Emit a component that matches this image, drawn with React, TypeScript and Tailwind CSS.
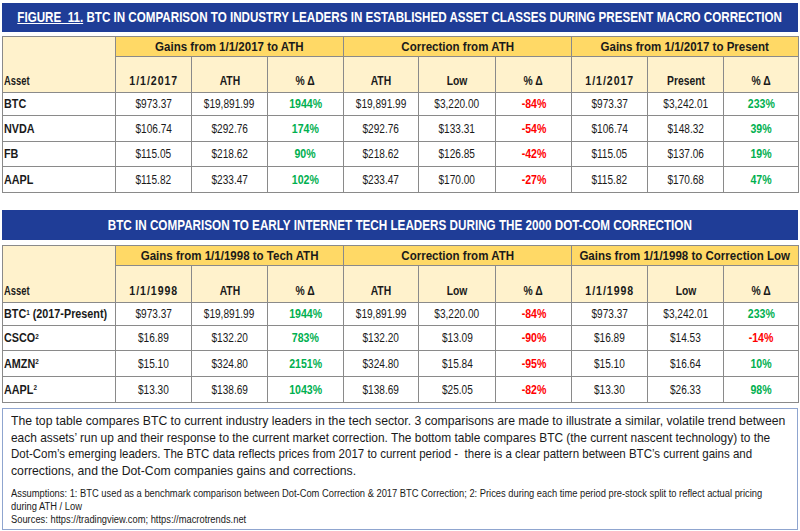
import React from "react";

type Row = { asset: React.ReactNode; vals: string[] };

const Sup = ({ n }: { n: string }) => <sup className="text-[7px]">{n}</sup>;

const t1: Row[] = [
  { asset: "BTC", vals: ["$973.37", "$19,891.99", "1944%", "$19,891.99", "$3,220.00", "-84%", "$973.37", "$3,242.01", "233%"] },
  { asset: "NVDA", vals: ["$106.74", "$292.76", "174%", "$292.76", "$133.31", "-54%", "$106.74", "$148.32", "39%"] },
  { asset: "FB", vals: ["$115.05", "$218.62", "90%", "$218.62", "$126.85", "-42%", "$115.05", "$137.06", "19%"] },
  { asset: "AAPL", vals: ["$115.82", "$233.47", "102%", "$233.47", "$170.00", "-27%", "$115.82", "$170.68", "47%"] },
];

const t2: Row[] = [
  { asset: <>BTC<Sup n="1" /> (2017-Present)</>, vals: ["$973.37", "$19,891.99", "1944%", "$19,891.99", "$3,220.00", "-84%", "$973.37", "$3,242.01", "233%"] },
  { asset: <>CSCO<Sup n="2" /></>, vals: ["$16.89", "$132.20", "783%", "$132.20", "$13.09", "-90%", "$16.89", "$14.53", "-14%"] },
  { asset: <>AMZN<Sup n="2" /></>, vals: ["$15.10", "$324.80", "2151%", "$324.80", "$15.84", "-95%", "$15.10", "$16.64", "10%"] },
  { asset: <>AAPL<Sup n="2" /></>, vals: ["$13.30", "$138.69", "1043%", "$138.69", "$25.05", "-82%", "$13.30", "$26.33", "98%"] },
];

const widths = [113, 76, 76, 76, 75, 77, 76, 76, 76, 75];

function DataTable({
  groups,
  subs,
  rows,
  heights,
  subH,
}: {
  groups: string[];
  subs: string[];
  rows: Row[];
  heights: number[];
  subH: string;
}) {
  return (
    <table className="w-full table-fixed border-collapse text-[12px] text-[#1a1a1a]">
      <colgroup>
        {widths.map((w, i) => (
          <col key={i} style={{ width: w }} />
        ))}
      </colgroup>
      <thead>
        <tr className="h-[20px]">
          <th rowSpan={2} className="border border-[#8a8a8a] bg-[#fff2cc] text-left align-bottom pb-[2px] pl-[1px] font-bold">
            <span className="inline-block whitespace-nowrap scale-x-[0.78] origin-left">Asset</span>
          </th>
          {groups.map((g) => (
            <th key={g} colSpan={3} className="border border-[#8a8a8a] bg-[#ffd966] font-bold text-center p-0">
              <span className="inline-block whitespace-nowrap scale-x-[0.96]">{g}</span>
            </th>
          ))}
        </tr>
        <tr className={subH}>
          {subs.map((s, i) => (
            <th key={i} className="border border-[#8a8a8a] bg-[#fff2cc] font-bold text-center align-bottom pb-[2px] p-0">
              <span
                className={
                  s.includes("/")
                    ? "inline-block whitespace-nowrap scale-x-[0.88] tracking-[1.1px]"
                    : "inline-block whitespace-nowrap scale-x-[0.86]"
                }
              >
                {s}
              </span>
            </th>
          ))}
        </tr>
      </thead>
      <tbody>
        {rows.map((r, ri) => (
          <tr key={ri} style={{ height: heights[ri] }}>
            <td className="border border-[#8a8a8a] bg-white text-left font-bold pl-[1px] p-0">
              <span className="inline-block whitespace-nowrap scale-x-[0.9] origin-left">{r.asset}</span>
            </td>
            {r.vals.map((v, i) => {
              const pct = i % 3 === 2;
              if (pct) {
                return (
                  <td
                    key={i}
                    className={
                      v.startsWith("-")
                        ? "border border-[#8a8a8a] bg-white text-center p-0 text-[#ff0000] font-bold"
                        : "border border-[#8a8a8a] bg-white text-center p-0 text-[#00b050] font-bold"
                    }
                  >
                    <span className="inline-block whitespace-nowrap scale-x-[0.88]">{v}</span>
                  </td>
                );
              }
              return (
                <td key={i} className="border border-[#8a8a8a] bg-white text-center p-0">
                  <span className="inline-block whitespace-nowrap scale-x-[0.84]">{v}</span>
                </td>
              );
            })}
          </tr>
        ))}
      </tbody>
    </table>
  );
}

const paraLines: [string, string][] = [
  [
    "The top table compares BTC to current industry leaders in the tech sector. 3 comparisons are made to illustrate a similar, volatile trend between",
    "whitespace-pre origin-left scale-x-[0.94]",
  ],
  [
    "each assets\u2019 run up and their response to the current market correction. The bottom table compares BTC (the current nascent technology) to the",
    "whitespace-pre origin-left scale-x-[0.916]",
  ],
  [
    "Dot-Com\u2019s emerging leaders. The BTC data reflects prices from 2017 to current period -  there is a clear pattern between BTC\u2019s current gains and",
    "whitespace-pre origin-left scale-x-[0.885]",
  ],
  ["corrections, and the Dot-Com companies gains and corrections.", "whitespace-pre origin-left scale-x-[0.94]"],
];

export default function App() {
  return (
    <div className="w-[800px] h-[531px] bg-white px-[2px] pt-[3px] font-['Liberation_Sans',Arial,sans-serif] overflow-hidden">
      <div className="h-[29px] bg-[#1f3d97] flex items-center justify-center text-white font-bold text-[14px]">
        <span className="inline-block whitespace-nowrap scale-x-[0.83]">
          <span className="underline">FIGURE&nbsp; 11.</span> BTC IN COMPARISON TO INDUSTRY LEADERS IN ESTABLISHED ASSET CLASSES DURING PRESENT MACRO CORRECTION
        </span>
      </div>
      <div className="mt-[4px]">
        <DataTable
          groups={["Gains from 1/1/2017 to ATH", "Correction from ATH", "Gains from 1/1/2017 to Present"]}
          subs={["1/1/2017", "ATH", "% Δ", "ATH", "Low", "% Δ", "1/1/2017", "Present", "% Δ"]}
          rows={t1}
          heights={[23, 26, 25, 26]}
          subH="h-[36px]"
        />
      </div>
      <div className="mt-[17px] h-[30px] bg-[#1f3d97] flex items-center justify-center text-white font-bold text-[14px]">
        <span className="inline-block whitespace-nowrap scale-x-[0.835]">
          BTC IN COMPARISON TO EARLY INTERNET TECH LEADERS DURING THE 2000 DOT-COM CORRECTION
        </span>
      </div>
      <div className="mt-[5px]">
        <DataTable
          groups={["Gains from 1/1/1998 to Tech ATH", "Correction from ATH", "Gains from 1/1/1998 to Correction Low"]}
          subs={["1/1/1998", "ATH", "% Δ", "ATH", "Low", "% Δ", "1/1/1998", "Low", "% Δ"]}
          rows={t2}
          heights={[23, 25, 26, 26]}
          subH="h-[37px]"
        />
      </div>
      <div className="mt-[5px] h-[122px] border border-[#8fa5cf] pl-[8px] pt-[4px] text-[#1a1a1a] overflow-hidden">
        <div className="text-[13px] leading-[16.7px]">
          {paraLines.map(([l, c], i) => (
            <div key={i} className={c}>
              {l}
            </div>
          ))}
        </div>
        <div className="mt-[7px] text-[10px] leading-[13px]">
          {[
            "Assumptions: 1: BTC used as a benchmark comparison between Dot-Com Correction & 2017 BTC Correction; 2: Prices during each time period pre-stock split to reflect actual pricing",
            "during ATH / Low",
            "Sources: https://tradingview.com; https://macrotrends.net",
          ].map((l, i) => (
            <div key={i} className="whitespace-pre origin-left scale-x-[0.934]">
              {l}
            </div>
          ))}
        </div>
      </div>
    </div>
  );
}
